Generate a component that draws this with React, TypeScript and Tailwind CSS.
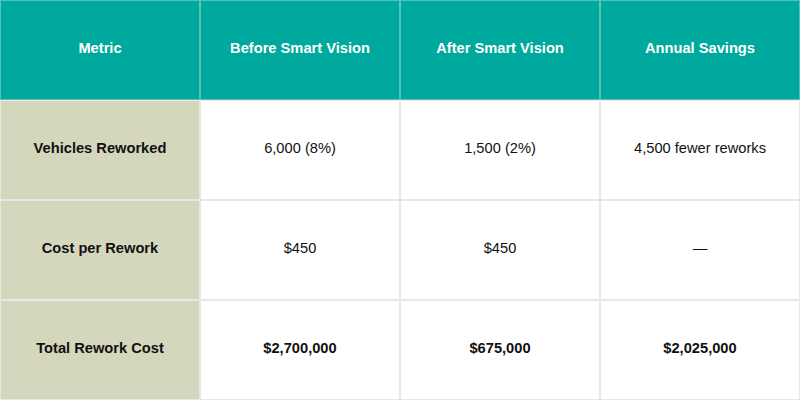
const header = ["Metric", "Before Smart Vision", "After Smart Vision", "Annual Savings"];

const rows = [
  ["Vehicles Reworked", "6,000 (8%)", "1,500 (2%)", "4,500 fewer reworks"],
  ["Cost per Rework", "$450", "$450", "—"],
  ["Total Rework Cost", "$2,700,000", "$675,000", "$2,025,000"],
];

export default function App() {
  return (
    <div className="w-[800px] h-[400px] grid grid-cols-4 grid-rows-4 font-[Liberation_Sans,Arial,sans-serif] text-[14.67px] leading-none">
      {header.map((h) => (
        <div
          key={h}
          className="flex items-center justify-center pb-[4px] border border-[#5bbfb5] bg-[#00a99d] text-white font-bold"
        >
          {h}
        </div>
      ))}
      {rows.map((row, i) =>
        row.map((cell, j) => (
          <div
            key={`${i}-${j}`}
            className={`flex items-center justify-center pb-[4px] border border-[#e8e8e8] text-[#111] ${
              j === 0 ? "bg-[#d4d7bc] font-bold" : "bg-white"
            } ${i === rows.length - 1 ? "font-bold" : ""}`}
          >
            {cell}
          </div>
        ))
      )}
    </div>
  );
}
